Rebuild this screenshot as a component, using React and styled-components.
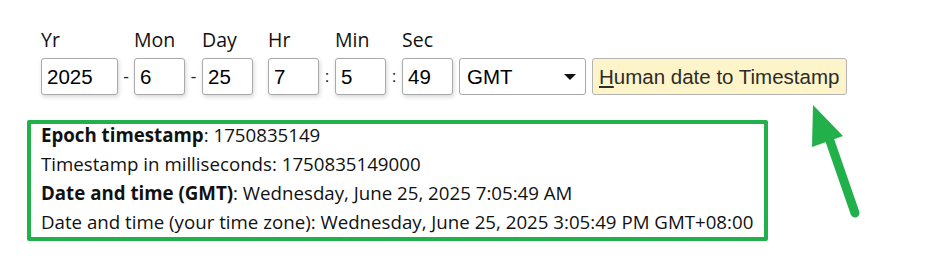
import React from "react"
import styled, { createGlobalStyle } from "styled-components"

const GlobalStyle = createGlobalStyle`
  body {
    margin: 0;
    background: #fff;
    font-family: "Open Sans", "Liberation Sans", sans-serif;
    color: #111;
  }
`

const fields = [
  { label: "Yr", value: "2025", width: 77, sep: "-", sepWidth: 16 },
  { label: "Mon", value: "6", width: 51, sep: "-", sepWidth: 17 },
  { label: "Day", value: "25", width: 51, sep: "", sepWidth: 15 },
  { label: "Hr", value: "7", width: 51, sep: ":", sepWidth: 16 },
  { label: "Min", value: "5", width: 51, sep: ":", sepWidth: 16 },
  { label: "Sec", value: "49", width: 51, sep: "", sepWidth: 6 },
]

function Arrow() {
  return (
    <ArrowSvg width="70" height="125" viewBox="800 100 70 125">
      <line
        x1="829"
        y1="138"
        x2="855"
        y2="213"
        stroke="#22b04b"
        strokeWidth="9"
        strokeLinecap="round"
      />
      <polygon points="813,105 812,147 843,136" fill="#22b04b" />
    </ArrowSvg>
  )
}

function App() {
  return (
    <Page>
      <GlobalStyle />
      <Form>
        {fields.map(f => (
          <React.Fragment key={f.label}>
            <Field>
              <Label>{f.label}</Label>
              <Input $width={f.width} defaultValue={f.value} />
            </Field>
            <Sep $width={f.sepWidth}>{f.sep}</Sep>
          </React.Fragment>
        ))}
        <SelectWrap>
          <Select defaultValue="GMT">
            <option>GMT</option>
            <option>Local time</option>
          </Select>
          <Caret />
        </SelectWrap>
        <Button>
          <u>H</u>uman date to Timestamp
        </Button>
      </Form>
      <Results>
        <Line>
          <b>Epoch timestamp</b>: 1750835149
        </Line>
        <Line>Timestamp in milliseconds: 1750835149000</Line>
        <Line>
          <b>Date and time (GMT)</b>: Wednesday, June 25, 2025 7:05:49 AM
        </Line>
        <Line>
          Date and time (your time zone): Wednesday, June 25, 2025 3:05:49 PM
          GMT+08:00
        </Line>
      </Results>
      <Arrow />
    </Page>
  )
}

const Page = styled.div`
  position: relative;
  width: 945px;
  height: 263px;
  box-sizing: border-box;
  padding: 28px 0 0 27px;
`

const Form = styled.div`
  display: flex;
  align-items: flex-end;
  margin-left: 14px;
`

const Field = styled.div`
  display: flex;
  flex-direction: column;
`

const Label = styled.label`
  font-family: "Open Sans", sans-serif;
  font-size: 19.5px;
  line-height: 24px;
  color: #111;
  margin-bottom: 6px;
`

const Input = styled.input`
  box-sizing: border-box;
  width: ${p => p.$width}px;
  height: 37px;
  padding: 0 5px;
  border: 1px solid #a9a9a9;
  border-radius: 3px;
  box-shadow: 1px 2px 4px rgba(0, 0, 0, 0.16);
  font-family: "Liberation Sans", Arial, sans-serif;
  font-size: 20.5px;
  color: #000;
  outline: none;
`

const Sep = styled.span`
  width: ${p => p.$width}px;
  flex: none;
  height: 37px;
  line-height: 37px;
  text-align: center;
  font-family: "Liberation Sans", Arial, sans-serif;
  font-size: 17px;
  color: #222;
`

const SelectWrap = styled.div`
  position: relative;
  margin-right: 6px;
`

const Select = styled.select`
  appearance: none;
  box-sizing: border-box;
  width: 127px;
  height: 37px;
  padding: 0 7px;
  border: 1px solid #a9a9a9;
  border-radius: 3px;
  background: #fff;
  font-family: "Liberation Sans", Arial, sans-serif;
  font-size: 20.5px;
  color: #000;
  outline: none;
`

const Caret = styled.span`
  position: absolute;
  right: 10px;
  top: 16px;
  width: 0;
  height: 0;
  border-left: 6px solid transparent;
  border-right: 6px solid transparent;
  border-top: 6px solid #111;
  pointer-events: none;
`

const Button = styled.button`
  box-sizing: border-box;
  width: 255px;
  height: 37px;
  padding: 0 6px;
  border: 1px solid #b4b4b4;
  border-radius: 3px;
  background: #fdf5c9;
  font-family: "Liberation Sans", Arial, sans-serif;
  font-size: 20.5px;
  color: #2b2b2b;
  text-align: left;
  white-space: nowrap;
`

const Results = styled.div`
  box-sizing: border-box;
  width: 741px;
  margin-top: 25px;
  padding: 0 10px 5px 14px;
  box-shadow: inset 0 0 0 4px #22b04b;
  border-radius: 2px;
`

const Line = styled.div`
  font-family: "Open Sans", sans-serif;
  font-size: 18.7px;
  line-height: 29px;
  color: #111;
  white-space: nowrap;

  b {
    font-weight: 700;
  }
`

const ArrowSvg = styled.svg`
  position: absolute;
  left: 800px;
  top: 100px;
`

export default App
